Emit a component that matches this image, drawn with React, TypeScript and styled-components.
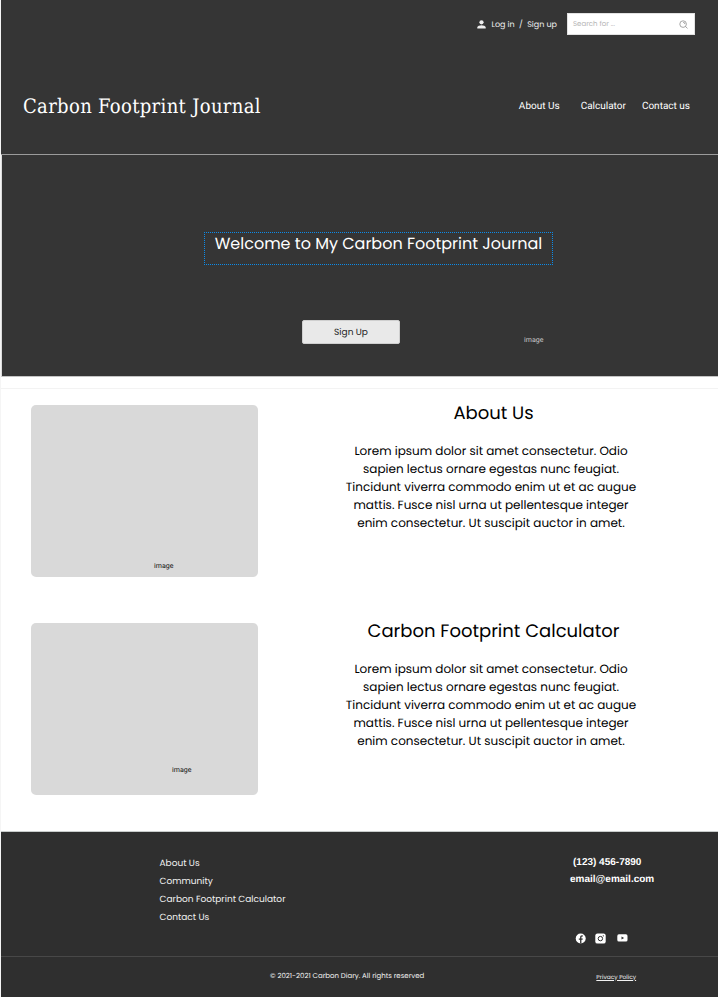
import React from "react";
import styled, { createGlobalStyle } from "styled-components";

const GlobalStyle = createGlobalStyle`
  *, *::before, *::after { box-sizing: border-box; }
  body { margin: 0; background: #fff; }
  h1, h2, p, ul { margin: 0; padding: 0; font-weight: 400; }
  a { color: inherit; text-decoration: none; }
`;

const Page = styled.div`
  width: 718px;
  height: 997px;
  display: flex;
  flex-direction: column;
  border-left: 1px solid #f5f5f5;
  font-family: Poppins, Inter, sans-serif;
  text-rendering: geometricPrecision;
  color: #000;
  white-space: nowrap;
  overflow: hidden;
`;

const Header = styled.header`
  height: 155px;
  flex: none;
  display: flex;
  flex-direction: column;
  background: #353535;
  border-bottom: 1px solid #9b9b9b;
  color: #fff;
`;

const TopBar = styled.div`
  display: flex;
  justify-content: flex-end;
  align-items: center;
  height: 22px;
  margin: 13px 23px 0 0;
`;

const Account = styled.div`
  display: flex;
  align-items: center;
  margin: 1px 10px 0 0;
  font-size: 8px;
  line-height: 12px;
  color: #f0f0f0;

  svg { margin-right: 5px; }
`;

const Slash = styled.span`
  width: 12.5px;
  text-align: center;
`;

const SearchBox = styled.label`
  display: flex;
  align-items: center;
  justify-content: space-between;
  width: 128px;
  height: 22px;
  padding: 0 6px 0 5px;
  background: #fff;
  border: 1px solid #e2e2e2;
  font-size: 7px;
  line-height: 10px;
  color: #b5b5b5;

  span { padding-top: 2px; }
`;

const Masthead = styled.div`
  display: flex;
  justify-content: space-between;
  align-items: center;
  height: 30px;
  margin: 56px 28px 0 22px;
`;

const Brand = styled.h1`
  font-family: "Roboto Slab", "DejaVu Serif Condensed", "DejaVu Serif", serif;
  font-stretch: condensed;
  font-size: 20px;
  line-height: 30px;
  letter-spacing: 0.34px;
`;

const Nav = styled.nav`
  display: flex;
  padding-top: 2px;
  font: 10px/14px Roboto, sans-serif;

  a:nth-child(2) { margin-left: 21px; }
  a:nth-child(3) { margin-left: 16px; }
`;

const Hero = styled.section`
  flex: none;
  height: 222px;
  display: flex;
  flex-direction: column;
  padding: 77px 0 0 202px;
  background: #353535;
  border-left: 1px solid #dcdcdc;
  border-bottom: 1px solid #c4c4c4;
`;

const HeroTitle = styled.h2`
  width: 349px;
  height: 33px;
  border: 1px dotted #0d8be8;
  font-size: 16px;
  line-height: 22px;
  text-align: center;
  color: #fff;
`;

const HeroActions = styled.div`
  display: flex;
  margin: 55px 0 0 98px;
`;

const SignUpButton = styled.button`
  width: 98px;
  height: 24px;
  padding: 2px 0 0;
  border: 1px solid #cfcfcf;
  border-radius: 2px;
  background: #e9e9e9;
  color: #222;
  font: 9px/20px Poppins, Inter, sans-serif;
  text-rendering: inherit;
`;

const Caption = styled.span<{ $light?: boolean }>`
  font: 7px/10px Roboto, sans-serif;
  letter-spacing: 0.05px;
  color: ${({ $light }) => ($light ? "#c8c8c8" : "#111")};
`;

const HeroCaption = styled(Caption)`
  margin: 15px 0 0 124px;
`;

const Main = styled.main`
  flex: none;
  height: 444px;
  margin-top: 11px;
  padding: 16px 0 0 30px;
  border-top: 1px solid #f3f3f3;
  border-bottom: 1px solid #c8cccb;
  display: flex;
  flex-direction: column;
  gap: 46px;
`;

const Feature = styled.article`
  display: flex;
  flex: none;
  height: 172px;
`;

const Picture = styled.div<{ $left: number; $top: number }>`
  flex: none;
  display: flex;
  align-items: flex-start;
  width: 227px;
  height: 172px;
  padding: ${({ $top, $left }) => `${$top}px 0 0 ${$left}px`};
  border-radius: 5px;
  background: #d9d9d9;
`;

const Copy = styled.div`
  width: 320px;
  margin-left: 73px;
  padding-top: 1px;
  text-align: center;
`;

const FeatureTitle = styled.h2`
  padding-left: 5px;
  font-size: 18px;
  line-height: 16px;
`;

const Paragraph = styled.p`
  width: 300px;
  margin: 21px auto 0;
  font-size: 12px;
  line-height: 18px;
  white-space: normal;
`;

const Footer = styled.footer`
  flex: 1;
  display: flex;
  flex-direction: column;
  background: #2f2f2f;
  color: #f2f2f2;
`;

const FooterMain = styled.div`
  height: 125px;
  display: flex;
  justify-content: space-between;
  padding: 22px 63px 0 158.5px;
  border-bottom: 1px solid #484848;
`;

const FooterLinks = styled.ul`
  list-style: none;
  padding-top: 1px;
  font-size: 9px;
  line-height: 18px;
`;

const Contact = styled.address`
  width: 85px;
  display: flex;
  flex-direction: column;
  font: bold 10px/17px "Liberation Sans", Arial, sans-serif;
  color: #fff;

  a:first-child { margin-left: 3px; }
`;

const Socials = styled.div`
  display: flex;
  align-items: center;
  margin: 45px 0 0 5px;
  gap: 9px;

  svg:last-child { margin-left: 2px; }
`;

const Legal = styled.div`
  display: flex;
  align-items: flex-start;
  padding: 15px 0 0 269px;
  font-size: 7px;
  line-height: 10px;
`;

const Privacy = styled.a`
  && { text-decoration: underline; }
  margin: 1px 0 0 172px;
  font-size: 5.9px;
`;

const PersonIcon = () => (
  <svg width="9" height="9" viewBox="0 0 9 9" fill="#eee">
    <circle cx="4.5" cy="2.3" r="2.1" />
    <path d="M0.3 8.6V7.6C0.3 6 2.8 5.2 4.5 5.2S8.7 6 8.7 7.6V8.6Z" />
  </svg>
);

const SearchIcon = () => (
  <svg width="9" height="9" viewBox="0 0 9 9" fill="none" stroke="#888" strokeWidth="0.75">
    <circle cx="4.1" cy="4.1" r="3.3" />
    <path d="M6.5 6.5L8.5 8.4M4.1 2.3A1.8 1.8 0 0 1 5.9 4.1" />
  </svg>
);

const FacebookIcon = () => (
  <svg width="11" height="11" viewBox="0 0 11 11">
    <circle cx="5.7" cy="5.5" r="5" fill="#fff" />
    <path d="M5.1 10.6V6.8H3.8V5.4H5.1V4.3C5.1 3 5.9 2.3 7 2.3L7.9 2.4V3.6H7.2C6.6 3.6 6.4 3.9 6.4 4.4V5.4H7.8L7.6 6.8H6.4V10.6Z" fill="#2f2f2f" />
  </svg>
);

const InstagramIcon = () => (
  <svg width="11" height="11" viewBox="0 0 11 11">
    <rect x="0.3" y="0.4" width="10.4" height="10.2" rx="2.2" fill="#fff" />
    <circle cx="5.4" cy="5.6" r="2.2" fill="none" stroke="#2f2f2f" strokeWidth="1" />
    <circle cx="8.3" cy="2.8" r="0.65" fill="#2f2f2f" />
  </svg>
);

const YoutubeIcon = () => (
  <svg width="11" height="11" viewBox="0 0 11 11">
    <rect x="0.3" y="1.3" width="10.2" height="7.3" rx="1.6" fill="#fff" />
    <path d="M4.5 3.4L7.1 4.95L4.5 6.5Z" fill="#2f2f2f" />
  </svg>
);

const lorem =
  "Lorem ipsum dolor sit amet consectetur. Odio sapien lectus ornare egestas nunc feugiat. Tincidunt viverra commodo enim ut et ac augue mattis. Fusce nisl urna ut pellentesque integer enim consectetur. Ut suscipit auctor in amet.";

const features = [
  { title: "About Us", left: 123, top: 156 },
  { title: "Carbon Footprint Calculator", left: 141, top: 142 },
];

const footerLinks = ["About Us", "Community", "Carbon Footprint Calculator", "Contact Us"];

export default function App() {
  return (
    <Page>
      <GlobalStyle />
      <Header>
        <TopBar>
          <Account>
            <PersonIcon />
            <a href="#">Log in</a>
            <Slash>/</Slash>
            <a href="#">Sign up</a>
          </Account>
          <SearchBox>
            <span>Search for ...</span>
            <SearchIcon />
          </SearchBox>
        </TopBar>
        <Masthead>
          <Brand>Carbon Footprint Journal</Brand>
          <Nav>
            <a href="#">About Us</a>
            <a href="#">Calculator</a>
            <a href="#">Contact us</a>
          </Nav>
        </Masthead>
      </Header>
      <Hero>
        <HeroTitle>Welcome to My Carbon Footprint Journal</HeroTitle>
        <HeroActions>
          <SignUpButton>Sign Up</SignUpButton>
          <HeroCaption $light>image</HeroCaption>
        </HeroActions>
      </Hero>
      <Main>
        {features.map((f) => (
          <Feature key={f.title}>
            <Picture $left={f.left} $top={f.top}>
              <Caption>image</Caption>
            </Picture>
            <Copy>
              <FeatureTitle>{f.title}</FeatureTitle>
              <Paragraph>{lorem}</Paragraph>
            </Copy>
          </Feature>
        ))}
      </Main>
      <Footer>
        <FooterMain>
          <FooterLinks>
            {footerLinks.map((text) => (
              <li key={text}>
                <a href="#">{text}</a>
              </li>
            ))}
          </FooterLinks>
          <Contact>
            <a href="#">(123) 456-7890</a>
            <a href="#">email@email.com</a>
            <Socials>
              <FacebookIcon />
              <InstagramIcon />
              <YoutubeIcon />
            </Socials>
          </Contact>
        </FooterMain>
        <Legal>
          <span>© 2021-2021 Carbon Diary. All rights reserved</span>
          <Privacy href="#">Privacy Policy</Privacy>
        </Legal>
      </Footer>
    </Page>
  );
}
